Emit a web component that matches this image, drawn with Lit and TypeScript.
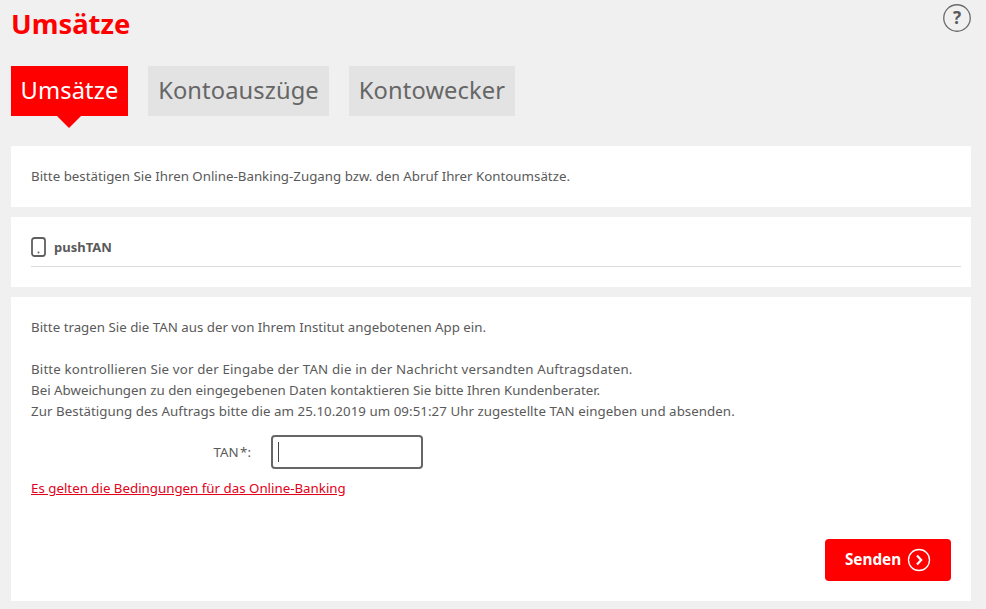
import { LitElement, html, css } from "lit";
import { customElement } from "lit/decorators.js";

@customElement("app-root")
export class AppRoot extends LitElement {
  static styles = css`
    :host {
      display: block;
      width: 986px;
      height: 609px;
      overflow: hidden;
      background: #f0f0f0;
      font-family: "Noto Sans", "Open Sans", sans-serif;
      color: #5a5a5a;
      font-size: 13.3px;
      box-sizing: border-box;
      padding: 0 15px 0 11px;
    }
    .head {
      height: 66px;
      display: flex;
      justify-content: space-between;
      align-items: flex-start;
    }
    h1 {
      margin: 6px 0 0;
      font-size: 27.4px;
      line-height: 36px;
      font-weight: 700;
      color: #ff0000;
    }
    .help {
      margin: 4px 0 0;
      width: 28px;
      height: 28px;
    }
    .tabs {
      display: grid;
      grid-template-columns: 117px 181px 166px;
      gap: 20px;
      height: 80px;
    }
    .tab {
      position: relative;
      height: 50px;
      box-sizing: border-box;
      display: flex;
      align-items: center;
      justify-content: center;
      background: #e3e3e3;
      font-size: 23.7px;
      letter-spacing: 0.1px;
      color: #666;
      padding-bottom: 3px;
    }
    .tab.active {
      background: #ff0000;
      color: #fff;
    }
    .tab.active::after {
      content: "";
      position: absolute;
      left: 46px;
      top: 50px;
      width: 0;
      height: 0;
      border-left: 12px solid transparent;
      border-right: 12px solid transparent;
      border-top: 12px solid #ff0000;
    }
    .card {
      background: #fff;
      margin-bottom: 10px;
      box-sizing: border-box;
    }
    .intro {
      height: 61px;
      padding: 20px;
      line-height: 20px;
    }
    .method {
      height: 70px;
      padding: 15px 10px 0 20px;
    }
    .method-row {
      display: flex;
      align-items: center;
      gap: 8px;
      height: 30px;
      padding-bottom: 4px;
      border-bottom: 1px solid #dcdcdc;
      font-weight: 700;
      font-size: 13px;
    }
    .method-row svg {
      width: 15px;
      height: 20px;
      flex: none;
    }
    .form {
      height: 304px;
      padding: 20px;
      display: flex;
      flex-direction: column;
    }
    .form p {
      margin: 0;
      line-height: 21px;
    }
    .gap {
      height: 21px;
    }
    .wide {
      letter-spacing: 0.16px;
    }
    .wider {
      letter-spacing: 0.05px;
    }
    .field {
      display: flex;
      align-items: center;
      margin-top: 13px;
      height: 34px;
    }
    .field label {
      width: 240px;
      padding-right: 20px;
      box-sizing: border-box;
      text-align: right;
      word-spacing: -2px;
    }
    .input {
      width: 152px;
      height: 34px;
      box-sizing: border-box;
      border: 2px solid #666;
      border-radius: 4px;
      background: #fff;
      display: flex;
      align-items: center;
      padding-left: 5px;
    }
    .caret {
      width: 1px;
      height: 20px;
      background: #444;
    }
    a {
      display: block;
      margin-top: 10px;
      color: #e2001a;
      text-decoration: underline;
      line-height: 18px;
    }
    .actions {
      margin-top: auto;
      display: flex;
      justify-content: flex-end;
    }
    .send {
      width: 126px;
      height: 42px;
      border: 0;
      border-radius: 4px;
      background: #ff0000;
      color: #fff;
      font-family: inherit;
      font-size: 15.3px;
      font-weight: 700;
      display: flex;
      align-items: center;
      justify-content: center;
      gap: 6px;
      padding: 0;
    }
    .send span {
      margin-top: -2px;
    }
    .send svg {
      width: 24px;
      height: 24px;
    }
  `;

  render() {
    return html`
      <div class="head">
        <h1>Umsätze</h1>
        <svg class="help" viewBox="0 0 28 28">
          <circle cx="14" cy="14" r="13.25" fill="none" stroke="#6a6a6a" stroke-width="1.3" />
          <text x="14" y="20" text-anchor="middle" font-size="17" font-weight="700" fill="#5a5a5a" font-family="Noto Sans">?</text>
        </svg>
      </div>
      <div class="tabs">
        <div class="tab active">Umsätze</div>
        <div class="tab">Kontoauszüge</div>
        <div class="tab">Kontowecker</div>
      </div>
      <div class="card intro">Bitte bestätigen Sie Ihren Online-Banking-Zugang bzw. den Abruf Ihrer Kontoumsätze.</div>
      <div class="card method">
        <div class="method-row">
          <svg viewBox="0 0 15 20">
            <rect x="1" y="1" width="13" height="18" rx="2.5" fill="none" stroke="#5f5f5f" stroke-width="1.8" />
            <circle cx="7.5" cy="15.5" r="1" fill="#5f5f5f" />
          </svg>
          pushTAN
        </div>
      </div>
      <div class="card form">
        <p>Bitte tragen Sie die TAN aus der von Ihrem Institut angebotenen App ein.</p>
        <div class="gap"></div>
        <p class="wide">Bitte kontrollieren Sie vor der Eingabe der TAN die in der Nachricht versandten Auftragsdaten.</p>
        <p>Bei Abweichungen zu den eingegebenen Daten kontaktieren Sie bitte Ihren Kundenberater.</p>
        <p class="wider">Zur Bestätigung des Auftrags bitte die am 25.10.2019 um 09:51:27 Uhr zugestellte TAN eingeben und absenden.</p>
        <div class="field">
          <label>TAN *:</label>
          <div class="input"><span class="caret"></span></div>
        </div>
        <a href="#">Es gelten die Bedingungen für das Online-Banking</a>
        <div class="actions">
          <button class="send">
            <span>Senden</span>
            <svg viewBox="0 0 24 24">
              <circle cx="12" cy="12" r="10.5" fill="none" stroke="#fff" stroke-width="1.3" />
              <path d="M10 7.5l4.2 4.5-4.2 4.5" fill="none" stroke="#fff" stroke-width="2.2" />
            </svg>
          </button>
        </div>
      </div>
    `;
  }
}
